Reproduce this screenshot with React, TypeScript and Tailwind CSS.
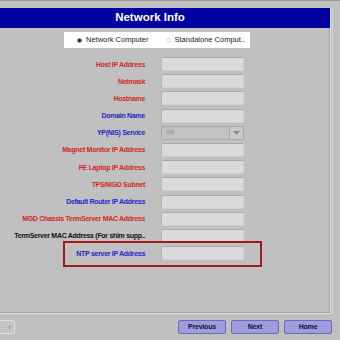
import React from "react";

type Row = {
  label: string;
  color: "red" | "blue" | "black";
  kind?: "input" | "select";
};

const rows: Row[] = [
  { label: "Host IP Address", color: "red" },
  { label: "Netmask", color: "red" },
  { label: "Hostname", color: "red" },
  { label: "Domain Name", color: "blue" },
  { label: "YP(NIS) Service", color: "blue", kind: "select" },
  { label: "Magnet Monitor IP Address", color: "red" },
  { label: "FE Laptop IP Address", color: "red" },
  { label: "TPS/MGD Subnet", color: "red" },
  { label: "Default Router IP Address", color: "blue" },
  { label: "MGD Chassis TermServer MAC Address", color: "red" },
  { label: "TermServer MAC Address (For shim supp..", color: "black" },
  { label: "NTP server IP Address", color: "blue" },
];

const labelColor = (c: Row["color"]) => {
  if (c === "red") return "text-[#d02828]";
  if (c === "blue") return "text-[#2424c8]";
  return "text-[#111111]";
};

const FormRow = ({ row }: { row: Row }) => {
  return (
    <div className="flex items-center h-[14px]">
      <div
        className={`w-[145px] text-right font-bold text-[7px] tracking-[-0.3px] leading-none whitespace-nowrap ${labelColor(row.color)}`}
      >
        {row.label}
      </div>
      {row.kind === "select" ? (
        <div className="ml-[16px] w-[83px] h-[14px] flex items-center border border-[#a8a8a8] rounded-[2px] bg-[#c2c2c2]">
          <span className="pl-[4px] text-[6px] text-[#8a8a8a] flex-1">Off</span>
          <div className="w-[14px] h-[12px] flex items-center justify-center border-l border-[#a8a8a8] bg-[#cacaca]">
            <svg width="7" height="4" viewBox="0 0 7 4">
              <path d="M0 0 L7 0 L3.5 4 Z" fill="#8c8c8c" />
            </svg>
          </div>
        </div>
      ) : (
        <div className="ml-[16px] w-[83px] h-[14px] rounded-[2px] bg-[#dadada] border border-[#cfcfcf] border-t-[#a9a9a9] border-l-[#b4b4b4]" />
      )}
    </div>
  );
};

const NavButton = ({ text, width }: { text: string; width: string }) => (
  <div
    className={`${width} h-[14px] flex items-center justify-center rounded-[2px] bg-[#9d9de0] border border-[#6c6ca8] font-bold text-[7px] tracking-[-0.2px] text-[#101030]`}
  >
    {text}
  </div>
);

const App: React.FC = (): JSX.Element => {
  return (
    <div
      className="w-[340px] h-[340px] bg-[#c0c0c0] overflow-hidden relative"
      style={{ fontFamily: '"Liberation Sans", Arial, sans-serif' }}
    >
      <div className="h-[8px] border-t border-[#9a9a9a]" />
      <div className="flex">
        <div className="w-[331px] h-[306px] border-r border-b border-[#e2e2e2] shadow-[inset_-1px_-1px_0_#a4a4a4]">
          <div className="h-[20px] bg-[#0000a0] flex items-center justify-center text-white font-bold text-[11.5px] pr-[30px]">
            Network Info
          </div>

          <div className="ml-[64px] mt-[4px] w-[186px] h-[16px] bg-white flex items-center text-[7.5px] text-[#222222]">
            <span className="ml-[13px] w-[5px] h-[5px] rounded-full bg-[#202020] border border-[#909090]" />
            <span className="ml-[4px]">Network Computer</span>
            <span className="ml-[17px] w-[5px] h-[5px] rounded-full border border-[#d8d8d8]" />
            <span className="ml-[4px]">Standalone Comput..</span>
          </div>

          <div className="mt-[9px] flex flex-col gap-[3.2px]">
            {rows.map((r) => (
              <FormRow key={r.label} row={r} />
            ))}
          </div>
        </div>
        <div className="ml-[1px] w-[1px] h-[306px] bg-[#d6d6d6]" />
      </div>

      <div className="flex items-center mt-[6px] h-[14px]">
        <div className="w-[16px] h-[14px] -ml-[1px] flex items-center justify-end pr-[3px] border border-[#e0e0e0] rounded-[2px] bg-[#c4c4c4] text-[6px] text-[#707070]">
          r
        </div>
        <div className="ml-auto mr-[8px] flex gap-[5px]">
          <NavButton text="Previous" width="w-[48px]" />
          <NavButton text="Next" width="w-[48px]" />
          <NavButton text="Home" width="w-[48px]" />
        </div>
      </div>

      <div className="absolute left-[63px] top-[241px] w-[199px] h-[26px] border-2 border-[#a31818]" />
    </div>
  );
};

export default App;
